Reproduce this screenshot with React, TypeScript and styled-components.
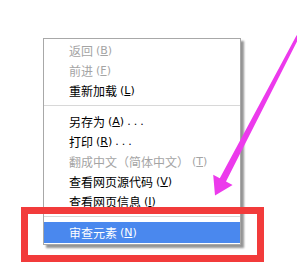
import React from 'react';
import styled, { createGlobalStyle } from 'styled-components';

type MenuEntry =
  | { kind: 'item'; label: string; key: string; tail?: string; disabled?: boolean; active?: boolean }
  | { kind: 'sep' };

const ENTRIES: MenuEntry[] = [
  { kind: 'item', label: '返回', key: 'B', disabled: true },
  { kind: 'item', label: '前进', key: 'F', disabled: true },
  { kind: 'item', label: '重新加载', key: 'L' },
  { kind: 'sep' },
  { kind: 'item', label: '另存为', key: 'A', tail: '...' },
  { kind: 'item', label: '打印', key: 'R', tail: '...' },
  { kind: 'item', label: '翻成中文（简体中文）', key: 'T', disabled: true },
  { kind: 'item', label: '查看网页源代码', key: 'V' },
  { kind: 'item', label: '查看网页信息', key: 'I' },
  { kind: 'sep' },
  { kind: 'item', label: '审查元素', key: 'N', active: true },
];

const App: React.FC = () => {
  return (
    <>
      <GlobalStyle />
      <Page>
        <Menu>
          {ENTRIES.map((entry, i) =>
            entry.kind === 'sep' ? (
              <Separator key={i} />
            ) : (
              <Item key={i} $disabled={entry.disabled} $active={entry.active}>
                {entry.label}
                <Mnemonic>
                  (<u>{entry.key}</u>)
                </Mnemonic>
                {entry.tail && <Dots>{entry.tail}</Dots>}
              </Item>
            ),
          )}
        </Menu>

        <Highlight />

        <Arrow viewBox="0 0 297 266" width="297" height="266">
          <polygon
            points="296.6,35.2 299.4,36.8 226,181.5 232.6,185 215,195.5 213.2,174.8 219.8,178.3"
            fill="#ec3aec"
          />
        </Arrow>
      </Page>
    </>
  );
};

const GlobalStyle = createGlobalStyle`
  html, body {
    margin: 0;
    background: #ffffff;
  }
  body {
    font-family: "Noto Sans CJK SC", "DejaVu Sans", sans-serif;
  }
`;

const Page = styled.div`
  position: relative;
  width: 297px;
  height: 266px;
  overflow: hidden;
  box-sizing: border-box;
  padding: 38px 0 0 43px;
  background: #ffffff;
`;

const Menu = styled.ul`
  list-style: none;
  margin: 0;
  width: 198px;
  box-sizing: border-box;
  padding: 1px 0;
  background: #ffffff;
  border: 1px solid #a8a8a8;
  box-shadow: 3px 3px 2px rgba(0, 0, 0, 0.42);
`;

const Item = styled.li<{ $disabled?: boolean; $active?: boolean }>`
  display: flex;
  align-items: center;
  height: ${(p) => (p.$active ? 21 : 20)}px;
  padding-left: 25px;
  font-size: 12px;
  white-space: nowrap;
  color: ${(p) => (p.$active ? '#ffffff' : p.$disabled ? '#a4a4a4' : '#000000')};
  background: ${(p) => (p.$active ? '#4a88ee' : 'transparent')};
`;

const Mnemonic = styled.span`
  margin-left: 3px;
  font-family: "DejaVu Sans", sans-serif;
  font-size: 11px;

  u {
    text-underline-offset: 1px;
  }
`;

const Dots = styled.span`
  margin-left: 3px;
  letter-spacing: 3px;
  font-family: "DejaVu Sans", sans-serif;
  font-size: 11px;
`;

const Separator = styled.li`
  height: 11px;
  display: flex;
  align-items: center;

  &::after {
    content: '';
    flex: 1;
    height: 1px;
    background: #d8d8d8;
  }
`;

const Highlight = styled.div`
  position: absolute;
  left: 21px;
  top: 207px;
  width: 243px;
  height: 55px;
  box-sizing: border-box;
  border: 7px solid #f23b3b;
`;

const Arrow = styled.svg`
  position: absolute;
  left: 0;
  top: 0;
  pointer-events: none;
`;

export default App;
